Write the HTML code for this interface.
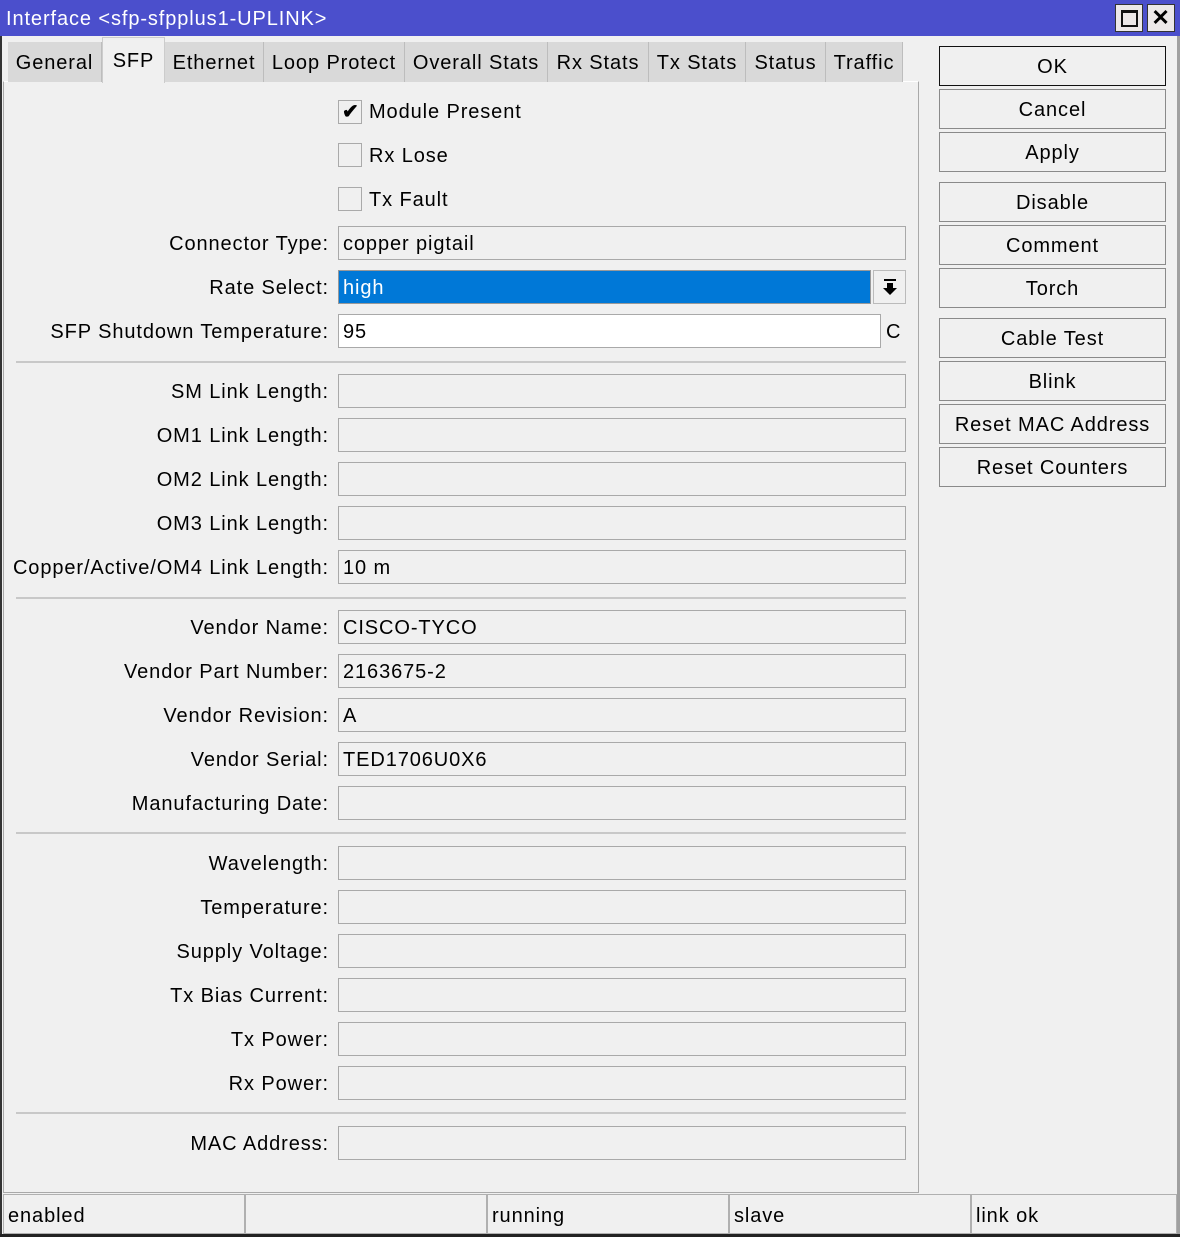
<!DOCTYPE html>
<html><head><meta charset="utf-8"><style>
*{margin:0;padding:0;box-sizing:border-box}
body{width:1180px;height:1237px;background:#f0f0f0;font-family:"Liberation Sans",sans-serif;font-size:20px;letter-spacing:0.9px;color:#000;position:relative;overflow:hidden}
.a{position:absolute}
.title{left:0;top:0;width:1180px;height:36px;background:#4b4fcc;color:#fff;font-size:20px;line-height:38px;padding-left:6px}
.wb{top:4px;width:28px;height:28px;background:#ece8e8;border:1px solid #333}
.tab{top:42px;height:40px;background:#d9d9d9;border-right:1px solid #bdbdbd;line-height:42px;text-align:center}
.panel{left:3px;top:81px;width:916px;height:1112px;border:1px solid #a9a9a9;border-top:1px solid #fff;background:#f0f0f0}
.lbl{right:851px;text-align:right;white-space:nowrap;line-height:36px;height:34px}
.fld{left:338px;width:568px;height:34px;border:1px solid #a9a9a9;background:#f0f0f0;line-height:34px;padding-left:4px}
.sep{left:16px;width:890px;height:2px;background:#c8c8c8}
.btn{left:939px;width:227px;height:40px;border:1px solid #8a8a8a;text-align:center;line-height:40px;background:#f0f0f0}
.cb{left:338px;width:24px;height:24px;border:1px solid #aaa;background:#f0f0f0}
.cbl{left:369px;line-height:26px}
.st{top:1194px;height:40px;border:1px solid #b0b0b0;line-height:42px;padding-left:4px;background:#f0f0f0}
</style></head><body>
<div class="a" style="left:0;top:0;width:2px;height:1237px;background:#333"></div>
<div class="a" style="right:0;top:0;width:3px;height:1237px;background:#a0a0a0"></div>
<div class="a title">Interface &lt;sfp-sfpplus1-UPLINK&gt;</div>
<div class="a wb" style="left:1115px"><div class="a" style="left:5px;top:5px;width:17px;height:17px;border:2px solid #111;border-top-width:3px"></div></div>
<div class="a wb" style="left:1147px;width:28px;text-align:center;line-height:26px;font-weight:bold;font-size:22px">✕</div>

<div class="a panel"></div>
<div class="a tab" style="left:8px;width:94px">General</div>
<div class="a tab" style="left:102px;width:63px;top:37px;height:46px;background:#f0f0f0;border:1px solid #ccc;border-bottom:none;line-height:46px">SFP</div>
<div class="a tab" style="left:165px;width:99px">Ethernet</div>
<div class="a tab" style="left:264px;width:141px">Loop Protect</div>
<div class="a tab" style="left:405px;width:143px">Overall Stats</div>
<div class="a tab" style="left:548px;width:101px">Rx Stats</div>
<div class="a tab" style="left:649px;width:97px">Tx Stats</div>
<div class="a tab" style="left:746px;width:80px">Status</div>
<div class="a tab" style="left:826px;width:77px">Traffic</div>

<div class="a cb" style="top:100px"><span class="a" style="left:3px;top:-2px;font-size:20px;font-weight:bold">✔</span></div>
<div class="a cbl" style="top:99px">Module Present</div>
<div class="a cb" style="top:143px"></div><div class="a cbl" style="top:143px">Rx Lose</div>
<div class="a cb" style="top:187px"></div><div class="a cbl" style="top:187px">Tx Fault</div>

<div class="a lbl" style="top:226px">Connector Type:</div><div class="a fld" style="top:226px">copper pigtail</div>
<div class="a lbl" style="top:270px">Rate Select:</div>
<div class="a fld" style="top:270px;width:533px;background:#0078d7;color:#fff;border-color:#999">high</div>
<div class="a" style="left:873px;top:270px;width:33px;height:34px;border:1px solid #bbb;text-align:center">
<svg width="20" height="22" viewBox="0 0 20 22" style="margin-top:5px"><rect x="4" y="3" width="12" height="2" fill="#000"/><path d="M7 7h6v5h4l-7 7-7-7h4z" fill="#000"/></svg></div>
<div class="a lbl" style="top:314px">SFP Shutdown Temperature:</div>
<div class="a fld" style="top:314px;width:543px;background:#fff">95</div>
<div class="a" style="left:886px;top:314px;line-height:36px">C</div>
<div class="a sep" style="top:361px"></div>

<div class="a lbl" style="top:374px">SM Link Length:</div><div class="a fld" style="top:374px"></div>
<div class="a lbl" style="top:418px">OM1 Link Length:</div><div class="a fld" style="top:418px"></div>
<div class="a lbl" style="top:462px">OM2 Link Length:</div><div class="a fld" style="top:462px"></div>
<div class="a lbl" style="top:506px">OM3 Link Length:</div><div class="a fld" style="top:506px"></div>
<div class="a lbl" style="top:550px">Copper/Active/OM4 Link Length:</div><div class="a fld" style="top:550px">10 m</div>
<div class="a sep" style="top:597px"></div>

<div class="a lbl" style="top:610px">Vendor Name:</div><div class="a fld" style="top:610px">CISCO-TYCO</div>
<div class="a lbl" style="top:654px">Vendor Part Number:</div><div class="a fld" style="top:654px">2163675-2</div>
<div class="a lbl" style="top:698px">Vendor Revision:</div><div class="a fld" style="top:698px">A</div>
<div class="a lbl" style="top:742px">Vendor Serial:</div><div class="a fld" style="top:742px">TED1706U0X6</div>
<div class="a lbl" style="top:786px">Manufacturing Date:</div><div class="a fld" style="top:786px"></div>
<div class="a sep" style="top:832px"></div>

<div class="a lbl" style="top:846px">Wavelength:</div><div class="a fld" style="top:846px"></div>
<div class="a lbl" style="top:890px">Temperature:</div><div class="a fld" style="top:890px"></div>
<div class="a lbl" style="top:934px">Supply Voltage:</div><div class="a fld" style="top:934px"></div>
<div class="a lbl" style="top:978px">Tx Bias Current:</div><div class="a fld" style="top:978px"></div>
<div class="a lbl" style="top:1022px">Tx Power:</div><div class="a fld" style="top:1022px"></div>
<div class="a lbl" style="top:1066px">Rx Power:</div><div class="a fld" style="top:1066px"></div>
<div class="a sep" style="top:1112px"></div>
<div class="a lbl" style="top:1126px">MAC Address:</div><div class="a fld" style="top:1126px"></div>

<div class="a btn" style="top:46px;border-color:#111">OK</div>
<div class="a btn" style="top:89px">Cancel</div>
<div class="a btn" style="top:132px">Apply</div>
<div class="a btn" style="top:182px">Disable</div>
<div class="a btn" style="top:225px">Comment</div>
<div class="a btn" style="top:268px">Torch</div>
<div class="a btn" style="top:318px">Cable Test</div>
<div class="a btn" style="top:361px">Blink</div>
<div class="a btn" style="top:404px">Reset MAC Address</div>
<div class="a btn" style="top:447px">Reset Counters</div>

<div class="a st" style="left:3px;width:242px">enabled</div>
<div class="a st" style="left:245px;width:242px"></div>
<div class="a st" style="left:487px;width:242px">running</div>
<div class="a st" style="left:729px;width:242px">slave</div>
<div class="a st" style="left:971px;width:206px">link ok</div>
<div class="a" style="left:0;top:1234px;width:1180px;height:3px;background:#222"></div>
</body></html>
